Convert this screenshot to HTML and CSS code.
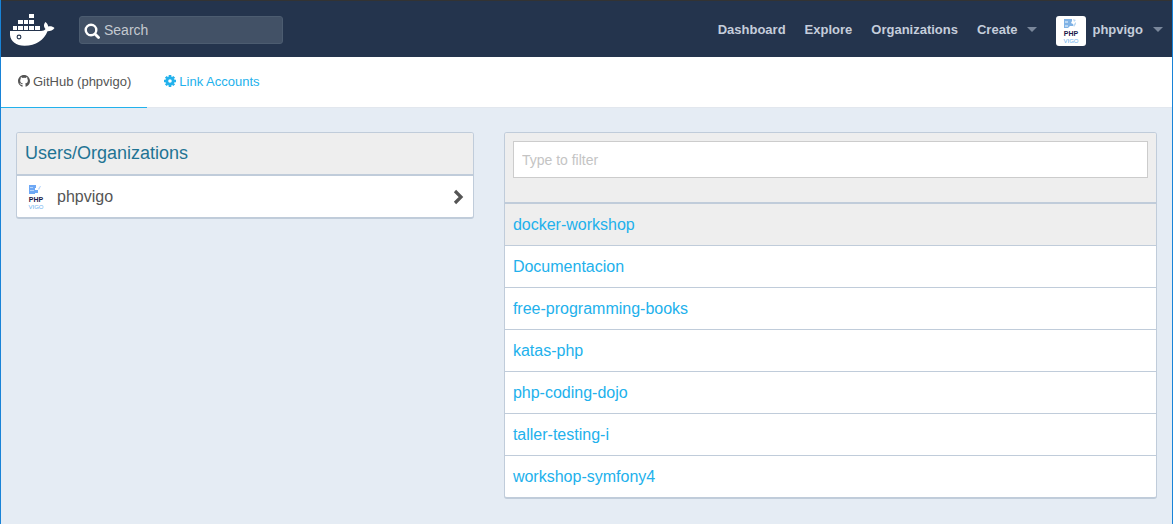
FILE: index.html
```html
<!DOCTYPE html>
<html lang="en">
<head>
    <meta charset="UTF-8">
    <meta name="viewport" content="width=device-width, initial-scale=1.0">
    <title>Docker Hub</title>
    <link rel="stylesheet" href="styles.css">
</head>
<body>
    <header class="topbar">
        <a class="logo" href="#" aria-label="Docker Hub">
            <svg width="45" height="32" viewBox="10 14 45 32">
                <path fill="#fff" d="M29 14h5v4h-5zM18 20h5v4h-5zM24 20h4v4h-4zM29 20h5v4h-5zM13 26h4v4h-4zM18 26h5v4h-5zM24 26h4v4h-4zM29 26h5v4h-5zM35 26h5v4h-5z"/>
                <path fill="#fff" d="M10 31H41C43 31 45 30 45.500 29C43.500 27 43.500 24 45.500 22C47 23 48 25 48.200 26.500C50.500 26 53 26.500 54.500 28C53 30.500 50.500 31.200 47.500 31.200C44 40 36 45.700 24.500 45.700C14.500 45.700 9 40 10 31Z"/>
                <circle cx="19" cy="37" r="1.900" fill="#fff" stroke="#24344d" stroke-width="1.100"/>
            </svg>
        </a>
        <form class="search">
            <svg width="16" height="16" viewBox="0 0 16 16" aria-hidden="true">
                <circle cx="7" cy="7" r="5.300" fill="none" stroke="#fff" stroke-width="2.400"/>
                <path d="M11 11l3.500 3.500" stroke="#fff" stroke-width="2.800" stroke-linecap="round"/>
            </svg>
            <input type="search" aria-label="Search" placeholder="Search">
        </form>
        <nav class="menu">
            <a href="#">Dashboard</a>
            <a href="#">Explore</a>
            <a href="#">Organizations</a>
            <button type="button" class="create">Create <span class="caret"></span></button>
            <button type="button" class="account">
                <svg class="avatar" width="30" height="30" viewBox="0 0 30 30" aria-hidden="true">
                    <path fill="#7fb2e5" d="M8 3h8v2l-1 2 2 1v2h-3l-2 2H8z"/>
                    <path fill="#b9d6f2" d="M9 5h3v2H9zM9 9h3v2H9zM17 3l3 1-2 2zM17 9l3-3v2l-2 3z"/>
                    <text class="vigo-php" x="15" y="20" text-anchor="middle">PHP</text>
                    <text class="vigo-city" x="15" y="27" text-anchor="middle">VIGO</text>
                </svg>
                phpvigo <span class="caret"></span>
            </button>
        </nav>
    </header>

    <nav class="tabs">
        <a class="tab active" href="#">
            <svg width="12" height="12" viewBox="0 0 16 16" aria-hidden="true">
                <path fill="currentColor" d="M8 0C3.580 0 0 3.580 0 8c0 3.540 2.290 6.530 5.470 7.590.4.070.55-.17.55-.38v-1.800c-2.200.4-2.700-.7-2.900-1.200-.2-.5-.6-1-.9-1.200-.3-.2-.5-.5 0-.5 1 0 1.300.8 1.700 1.300.6.9 1.600.7 2.150.5.080-.52.280-.87.510-1.070-1.780-.2-3.640-.89-3.640-3.950 0-.87.310-1.590.82-2.150-.080-.2-.36-1.020.080-2.120 0 0 .67-.21 2.200.82a7.600 7.600 0 0 1 4 0c1.530-1.040 2.200-.82 2.200-.82.440 1.100.160 1.920.080 2.120.510.560.82 1.270.82 2.150 0 3.070-1.870 3.750-3.650 3.950.290.250.540.730.540 1.480v2.400c0 .21.150.46.550.38A8 8 0 0 0 16 8c0-4.420-3.580-8-8-8z"/>
            </svg>
            GitHub (phpvigo)
        </a>
        <a class="tab" href="#">
            <svg width="12" height="12" viewBox="0 0 12 12" aria-hidden="true">
                <circle cx="6" cy="6" r="3.200" fill="none" stroke="currentColor" stroke-width="2.800"/>
                <path d="M6 0v2M6 10v2M0 6h2M10 6h2M1.800 1.800l1.400 1.400M8.800 8.800l1.400 1.400M1.800 10.200l1.400-1.400M8.800 3.200l1.400-1.400" stroke="currentColor" stroke-width="2.600"/>
            </svg>
            Link Accounts
        </a>
    </nav>

    <main class="columns">
        <section class="column">
            <div class="panel">
                <h1 class="panel-head title">Users/Organizations</h1>
                <a class="row user" href="#">
                    <svg width="30" height="30" viewBox="0 0 30 30" aria-hidden="true">
                        <path fill="#6ea8f5" d="M8 3h7v3h-1v2h3v3h-3v1H8z"/>
                        <path fill="#b5d3fa" d="M9 5h3v1H9zM9 8h4v1H9zM17 7l2-3h1l-2 4z"/>
                        <text class="vigo-php" x="15" y="20" text-anchor="middle">PHP</text>
                        <text class="vigo-city" x="15" y="27" text-anchor="middle">VIGO</text>
                    </svg>
                    <span>phpvigo</span>
                    <svg class="chevron" width="12" height="16" viewBox="0 0 12 16" aria-hidden="true">
                        <path d="M2 2l6 6-6 6" fill="none" stroke="#555" stroke-width="3.200"/>
                    </svg>
                </a>
            </div>
        </section>
        <section class="column">
            <div class="panel">
                <div class="panel-head filter">
                    <input type="text" aria-label="Filter repositories" placeholder="Type to filter">
                </div>
                <a class="row selected" href="#">docker-workshop</a>
                <a class="row" href="#">Documentacion</a>
                <a class="row" href="#">free-programming-books</a>
                <a class="row" href="#">katas-php</a>
                <a class="row" href="#">php-coding-dojo</a>
                <a class="row" href="#">taller-testing-i</a>
                <a class="row" href="#">workshop-symfony4</a>
            </div>
        </section>
    </main>
</body>
</html>
```

FILE: styles.css
```css
* {
    box-sizing: border-box;
}

body {
    margin: 0;
    min-height: 100vh;
    border: solid #1883d7;
    border-width: 0 1px;
    background: #e5ecf4;
    color: #555;
    font-family: "Liberation Sans", Arial, sans-serif;
    font-size: 13px;
}

a {
    color: #22b1ec;
    text-decoration: none;
}

input,
button {
    font-family: inherit;
}

.vigo-php {
    fill: #1b1b4b;
    font-size: 7px;
    font-weight: bold;
}

.vigo-city {
    fill: #6bb1f0;
    font-size: 6px;
    font-weight: normal;
}

/* top bar */
.topbar {
    display: flex;
    align-items: center;
    height: 57px;
    padding: 2px 9px 0;
    border-top: 1px solid #333;
    background: #24344d;
}

.logo svg,
.search svg,
.avatar {
    display: block;
}

.search {
    display: flex;
    align-items: center;
    width: 204px;
    height: 28px;
    margin-left: 24px;
    padding: 2px 4px 0;
    border: 1px solid #4c5c70;
    border-radius: 3px;
    background: #425166;
}

.search input {
    flex: 1;
    min-width: 0;
    margin-bottom: 2px;
    padding: 0 0 0 4px;
    border: 0;
    outline: 0;
    background: none;
    color: #fff;
    font-size: 14px;
}

.search input::placeholder {
    color: #c4c9d0;
}

.menu {
    display: flex;
    align-items: center;
    gap: 19px;
    margin-left: auto;
    padding-bottom: 2px;
}

.menu a,
.menu button {
    color: #c4cddb;
    font-size: 13px;
    font-weight: bold;
}

.menu button {
    display: flex;
    align-items: center;
    padding: 0;
    border: 0;
    background: none;
}

.avatar {
    margin: 4px 6px 0 0;
    border-radius: 3px;
    background: #fff;
}

.caret {
    margin-left: 10px;
    border: 5px solid transparent;
    border-top-color: #7a879b;
    border-bottom: 0;
}

/* account tabs */
.tabs {
    display: flex;
    height: 51px;
    border-bottom: 1px solid #e2e7ee;
    background: #fff;
}

.tab {
    display: flex;
    align-items: center;
    gap: 3px;
    height: 51px;
    padding: 0 16px 2px 17px;
    border-bottom: 1px solid transparent;
}

.tab.active {
    border-color: #22b1ec;
    color: #555;
}

/* panels */
.columns {
    display: grid;
    grid-template-columns: 5fr 7fr;
    padding: 24px 0;
}

.column {
    padding: 0 15px;
}

.panel {
    border: 1px solid #c0ccda;
    border-bottom-width: 2px;
    border-radius: 3px;
    background: #fff;
    overflow: hidden;
}

.panel-head {
    margin: 0;
    padding: 8px;
    border-bottom: 2px solid #c0ccda;
    background: #eee;
}

.title {
    color: #1f7494;
    font-size: 18px;
    font-weight: normal;
    line-height: 25px;
}

.filter {
    padding-bottom: 24px;
}

.filter input {
    display: block;
    width: 100%;
    height: 37px;
    padding: 0 8px;
    border: 1px solid #ccc;
    background: #fff;
    font-size: 14px;
}

.filter input::placeholder {
    color: #c4c4c4;
}

.row {
    display: block;
    padding: 0 8px;
    border-bottom: 1px solid #c0ccda;
    font-size: 16px;
    line-height: 41px;
}

.row:last-child {
    border-bottom: 0;
}

.row.selected {
    background: #eee;
}

.user {
    display: flex;
    align-items: center;
    gap: 6px;
    padding: 0 8px 0 4px;
    color: #555;
}

/* the logo text must not take the row's line height */
.user svg {
    line-height: 1;
}

.chevron {
    margin-left: auto;
}
```
